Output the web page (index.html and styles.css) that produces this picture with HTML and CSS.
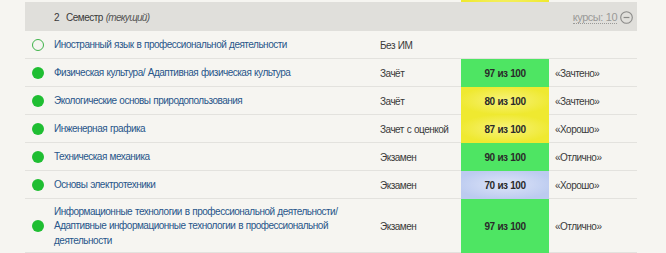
FILE: index.html
```html
<!DOCTYPE html>
<html lang="ru">
<head>
<meta charset="utf-8">
<link rel="stylesheet" href="styles.css">
</head>
<body>
<div class="table">
  <div class="row top">
    <div></div><div></div><div></div><div class="score yellow"></div><div></div>
  </div>
  <div class="sem">
    <div class="sem-title"><span class="num">2</span>Семестр <i>(текущий)</i></div>
    <div class="sem-right"><span class="count">курсы: 10</span>
      <svg class="minus" width="13" height="13" viewBox="0 0 13 13"><circle cx="6.5" cy="6.5" r="5.8" fill="none" stroke="#8a8a88" stroke-width="1.1"/><line x1="3.6" y1="6.5" x2="9.4" y2="6.5" stroke="#8a8a88" stroke-width="1.2"/></svg>
    </div>
  </div>
  <div class="row">
    <div class="c dotc"><span class="dot empty"></span></div>
    <div class="c name">Иностранный язык в профессиональной деятельности</div>
    <div class="c type">Без ИМ</div>
    <div class="c"></div>
    <div class="c res"></div>
  </div>
  <div class="row">
    <div class="c dotc"><span class="dot"></span></div>
    <div class="c name">Физическая культура/ Адаптивная физическая культура</div>
    <div class="c type">Зачёт</div>
    <div class="c score green">97 из 100</div>
    <div class="c res">«Зачтено»</div>
  </div>
  <div class="row">
    <div class="c dotc"><span class="dot"></span></div>
    <div class="c name">Экологические основы природопользования</div>
    <div class="c type">Зачёт</div>
    <div class="c score yellow">80 из 100</div>
    <div class="c res">«Зачтено»</div>
  </div>
  <div class="row">
    <div class="c dotc"><span class="dot"></span></div>
    <div class="c name">Инженерная графика</div>
    <div class="c type">Зачет с оценкой</div>
    <div class="c score yellow">87 из 100</div>
    <div class="c res">«Хорошо»</div>
  </div>
  <div class="row">
    <div class="c dotc"><span class="dot"></span></div>
    <div class="c name">Техническая механика</div>
    <div class="c type">Экзамен</div>
    <div class="c score green">90 из 100</div>
    <div class="c res">«Отлично»</div>
  </div>
  <div class="row">
    <div class="c dotc"><span class="dot"></span></div>
    <div class="c name">Основы электротехники</div>
    <div class="c type">Экзамен</div>
    <div class="c score blue">70 из 100</div>
    <div class="c res">«Хорошо»</div>
  </div>
  <div class="row tall">
    <div class="c dotc"><span class="dot"></span></div>
    <div class="c name">Информационные технологии в профессиональной деятельности/ Адаптивные информационные технологии в профессиональной деятельности</div>
    <div class="c type">Экзамен</div>
    <div class="c score green">97 из 100</div>
    <div class="c res">«Отлично»</div>
  </div>
</div>
</body>
</html>
```
FILE: styles.css
```css
html, body {
  margin: 0;
  padding: 0;
  background: #f6f5f1;
}
body {
  font-family: "Liberation Sans", Arial, sans-serif;
  font-size: 10px;
  letter-spacing: -0.5px;
  word-spacing: 0.5px;
  color: #333;
  overflow: hidden;
}
.table {
  margin-left: 25px;
  width: 612px;
}
.row {
  display: grid;
  grid-template-columns: 29px 326px 81px 88px 88px;
}
.row.top {
  height: 2px;
}
.c {
  box-sizing: border-box;
  height: 28px;
  padding-top: 2px;
  display: flex;
  align-items: center;
  border-bottom: 1px solid #e3e2de;
  white-space: nowrap;
}
.tall .c {
  height: 54px;
}
.sem {
  height: 29px;
  box-sizing: border-box;
  padding: 2px 4px 0 29px;
  background: #e0dfdb;
  display: flex;
  align-items: center;
  justify-content: space-between;
}
.sem-title {
  color: #3a3a3a;
}
.sem-title .num {
  margin-right: 7px;
}
.sem-title i {
  color: #555;
  letter-spacing: -0.7px;
}
.sem-right {
  display: flex;
  align-items: center;
  gap: 3px;
  color: #9a9a98;
  font-size: 11px;
  margin-top: -1px;
}
.count {
  border-bottom: 1px dotted #9a9a98;
  line-height: 12px;
}
.dotc {
  padding-top: 0;
  padding-left: 7px;
}
.dot {
  width: 12px;
  height: 12px;
  border-radius: 50%;
  background: #1fbe32;
  box-sizing: border-box;
}
.dot.empty {
  background: transparent;
  border: 1.5px solid #3fb34a;
}
.name {
  color: #28568a;
  line-height: 14.5px;
  padding-right: 30px;
  white-space: normal;
}
.type {
  color: #3a3a3a;
}
.score {
  justify-content: center;
  font-weight: 600;
  color: #2a2a2a;
}
.green {
  background: #4ee563;
  border-bottom-color: #4ee563;
}
.yellow {
  background: radial-gradient(ellipse at center, #f7f27a 0%, #efe930 75%);
  border-bottom-color: #efe930;
}
.blue {
  background: radial-gradient(ellipse at center, #dde4f8 0%, #bccbf0 80%);
  border-bottom-color: #bccbf0;
}
.res {
  padding-left: 6px;
  color: #3a3a3a;
}
```
